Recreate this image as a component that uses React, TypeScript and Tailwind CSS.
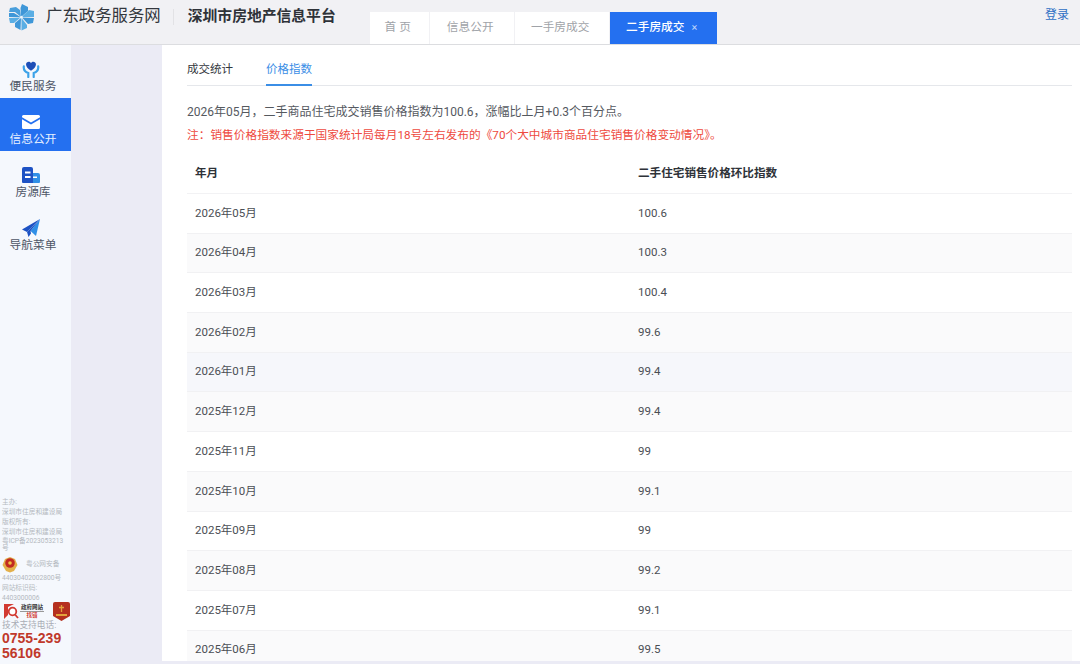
const rows = [
  ['2026年05月', '100.6'],
  ['2026年04月', '100.3'],
  ['2026年03月', '100.4'],
  ['2026年02月', '99.6'],
  ['2026年01月', '99.4'],
  ['2025年12月', '99.4'],
  ['2025年11月', '99'],
  ['2025年10月', '99.1'],
  ['2025年09月', '99'],
  ['2025年08月', '99.2'],
  ['2025年07月', '99.1'],
  ['2025年06月', '99.5'],
]

function Logo() {
  return (
    <svg width="27" height="28" viewBox="0 0 27 28" className="shrink-0">
      <path d="M13 14 L7 9 L1 9 L2 5 L8 4 L12 7 Z" fill="#4a9fdc" />
      <path d="M13 14 L12.500 5 L14 1 L20 4 L20 8 Z" fill="#3f97d8" />
      <path d="M13.500 14 L21 7 L26 8 L26 14 Z" fill="#5aaee4" />
      <path d="M14 14.500 L26 15 L25 20 L20 21 Z" fill="#3f97d8" />
      <path d="M13.500 15 L19 22 L19 25 L13.500 27.500 Z" fill="#5aaee4" />
      <path d="M13 15 L12.500 27 L7 24 L7 20 Z" fill="#3f97d8" />
      <path d="M12.500 14.500 L6 20 L2 20 L1 15 Z" fill="#5aaee4" />
      <path d="M12.500 14 L1 14 L1 10 L6 10 Z" fill="#3f97d8" />
      <circle cx="13.500" cy="14" r="1.300" fill="#eaf5fc" />
    </svg>
  )
}

function HeartHands() {
  return (
    <svg width="18" height="18" viewBox="0 0 20 20">
      <path d="M10 12 C6.500 9.500 4.500 7.500 4.500 5 C4.500 1.800 8.500 0.800 10 3.500 C11.500 0.800 15.500 1.800 15.500 5 C15.500 7.500 13.500 9.500 10 12 Z" fill="#1d4fb8" />
      <path d="M2 7 C1.500 11 4 13.500 7 14.500 L7 19 M18 7 C18.500 11 16 13.500 13 14.500 L13 19" fill="none" stroke="#3ba2e8" strokeWidth="2.400" strokeLinecap="round" />
    </svg>
  )
}

function Mail() {
  return (
    <svg width="18" height="14" viewBox="0 0 18 14">
      <path d="M1.500 0 H16.500 A1.500 1.500 0 0 1 18 1.500 L18 2.200 L9 7.500 L0 2.200 L0 1.500 A1.500 1.500 0 0 1 1.500 0 Z" fill="#fff" />
      <path d="M0 4.200 L9 9.500 L18 4.200 V12.500 A1.500 1.500 0 0 1 16.500 14 H1.500 A1.500 1.500 0 0 1 0 12.500 Z" fill="#fff" />
    </svg>
  )
}

function Building() {
  return (
    <svg width="18" height="16" viewBox="0 0 18 16">
      <path d="M0 2 A2 2 0 0 1 2 0 H9 A2 2 0 0 1 11 2 V16 H1 A1 1 0 0 1 0 15 Z" fill="#1d52c4" />
      <path d="M11 6 H16 A2 2 0 0 1 18 8 V15 A1 1 0 0 1 17 16 H11 Z" fill="#2f8fe6" />
      <rect x="3" y="4.500" width="5.500" height="2" fill="#fff" />
      <rect x="3" y="9" width="5.500" height="2" fill="#fff" />
      <rect x="11" y="9.500" width="4" height="1.500" fill="#fff" />
    </svg>
  )
}

function Plane() {
  return (
    <svg width="18" height="18" viewBox="0 0 18 18">
      <path d="M18 0 L0 10.500 L5 13 Z" fill="#1d52c4" />
      <path d="M18 0 L8.500 12 L14 17 Z" fill="#2f8fe6" />
      <path d="M18 0 L5 13 L6.500 18 L9 14.500 L8.500 12 Z" fill="#1d52c4" />
    </svg>
  )
}

function Badge() {
  return (
    <svg width="16" height="17" viewBox="0 0 16 17" className="shrink-0">
      <path d="M3 3 L8 1 L13 3 L15.500 9 L12 15 L8 16.500 L4 15 L0.500 9 Z" fill="#e3b04b" />
      <circle cx="8" cy="7" r="4.800" fill="#c22a22" />
      <circle cx="8" cy="7" r="1.800" fill="#f0c040" />
    </svg>
  )
}

function GovMark() {
  return (
    <svg width="15" height="15" viewBox="0 0 15 15" className="shrink-0">
      <path d="M0 0 H10 L4 3 V11 L0 15 Z" fill="#d23a32" />
      <circle cx="8.500" cy="7.500" r="3.800" fill="#fff" stroke="#d23a32" strokeWidth="1.800" />
      <path d="M11 10.500 L14 14" stroke="#d23a32" strokeWidth="1.800" />
    </svg>
  )
}

function Emblem() {
  return (
    <svg width="17" height="19" viewBox="0 0 17 19" className="shrink-0">
      <path d="M0 2 A2 2 0 0 1 2 0 H15 A2 2 0 0 1 17 2 V14 L8.500 19 L0 14 Z" fill="#b5301f" />
      <path d="M8.500 3 V10 M6 5.500 H11" stroke="#e3a23c" strokeWidth="1.300" />
      <rect x="3" y="12" width="11" height="2" fill="#e3a23c" />
    </svg>
  )
}

function SideItem({ icon, label, active }: { icon: React.ReactNode; label: string; active?: boolean }) {
  return (
    <div className={`flex h-[53px] flex-col items-center justify-end pb-[3px] pr-[5px] ${active ? 'bg-[#2470f0] text-[#e8f0ff]' : 'text-[#4d5566]'}`}>
      <div className="mr-[5px] flex h-[22px] items-center justify-center">{icon}</div>
      <span className="-mt-[3px] translate-y-[0px] text-[11.700px] leading-[18px]">{label}</span>
    </div>
  )
}

function Tab({ label, width, active }: { label: string; width: string; active?: boolean }) {
  return (
    <div className={`flex h-[32px] items-center justify-center pr-[3px] text-[11.700px] ${width} ${active ? 'bg-[#2470f0] font-medium text-white' : 'bg-white text-[#a0a3a8]'}`}>
      {label}
      {active && <span className="ml-[7px] text-[11px] font-normal text-[#bcd3fb]">×</span>}
    </div>
  )
}

export default function App() {
  return (
    <div className="flex h-[664px] w-[1080px] flex-col overflow-hidden bg-[#ebebf5] font-['Roboto','Noto_Sans_CJK_SC',sans-serif]">
      {/* top bar */}
      <header className="flex h-[45px] shrink-0 border-b border-[#dcdde0] bg-[#f1f1f4]">
        <div className="flex h-[33px] items-center pl-[8px]">
          <Logo />
          <span className="ml-[11px] text-[16.400px] text-[#33373d]">广东政务服务网</span>
          <span className="ml-[12px] h-[16px] w-px bg-[#e2e2e5]" />
          <span className="ml-[14px] text-[14.800px] font-bold text-[#2e3238]">深圳市房地产信息平台</span>
        </div>
        <nav className="ml-[34px] mt-[12px] flex">
          <Tab label="首 页" width="w-[59px]" />
          <div className="w-[1px]" />
          <Tab label="信息公开" width="w-[84px]" />
          <div className="w-[1px]" />
          <Tab label="一手房成交" width="w-[94px]" />
          <div className="w-[1px]" />
          <Tab label="二手房成交" width="w-[107px]" active />
        </nav>
        <span className="ml-auto mr-[11px] mt-[6px] text-[12px] leading-[18px] text-[#2e6fc4]">登录</span>
      </header>

      <div className="flex min-h-0 flex-1">
        {/* left menu */}
        <aside className="flex w-[71px] shrink-0 flex-col justify-between bg-[#f5f8fd]">
          <div>
            <SideItem icon={<HeartHands />} label="便民服务" />
            <SideItem icon={<Mail />} label="信息公开" active />
            <SideItem icon={<Building />} label="房源库" />
            <SideItem icon={<Plane />} label="导航菜单" />
          </div>
          <div className="pb-[3px] pl-[2px] text-[6.700px] leading-[10px] text-[#b4b8c0]">
            <p>主办:</p>
            <p className="whitespace-nowrap">深圳市住房和建设局</p>
            <p>版权所有:</p>
            <p className="whitespace-nowrap">深圳市住房和建设局</p>
            <p className="mt-[1px] w-[64px] break-all leading-[7px]">粤ICP备2023053213号</p>
            <div className="mt-[2px] flex h-[20px] items-center">
              <Badge />
              <span className="ml-[8px]">粤公网安备</span>
            </div>
            <p className="-mt-[1px] whitespace-nowrap">44030402002800号</p>
            <p>网站标识码:</p>
            <p>4403000006</p>
            <div className="ml-[2px] -mt-[1px] flex items-center">
              <GovMark />
              <div className="ml-[1px] w-[24px] text-center text-[5.500px] leading-[7px]">
                <p className="border-b border-[#999] font-bold text-[#333]">政府网站</p>
                <p className="font-bold text-[#d23a32]">找错</p>
              </div>
              <div className="ml-[9px]">
                <Emblem />
              </div>
            </div>
            <p className="-mt-[2px] text-[8.700px] leading-[12px] text-[#a9adb5]">技术支持电话:</p>
            <p className="w-[64px] break-all font-['Liberation_Sans'] text-[14px] font-bold leading-[15px] text-[#c0392b]">0755-23956106</p>
          </div>
        </aside>

        {/* main card */}
        <main className="ml-[91px] mb-[3px] min-w-0 flex-1 overflow-hidden bg-white pl-[25px] pr-[8px]">
          <div className="flex h-[41px] gap-[33px] border-b border-[#e5e7eb] text-[11.500px]">
            <span className="flex items-center pt-[9px] text-[#33373d]">成交统计</span>
            <span className="-mb-px flex items-center border-b-2 border-[#3b8ee6] pt-[10px] text-[#3b8ee6]">价格指数</span>
          </div>
          <p className="mt-[17px] text-[12px] leading-[18px] text-[#55595f]">
            2026年05月，二手商品住宅成交销售价格指数为100.6，涨幅比上月+0.3个百分点。
          </p>
          <p className="mt-[5px] text-[11.700px] leading-[18px] text-[#ee4a40]">
            注：销售价格指数来源于国家统计局每月18号左右发布的《70个大中城市商品住宅销售价格变动情况》。
          </p>
          <div className="mt-[10px]">
            <div className="flex h-[40px] items-center border-b border-[#f2f2f4] text-[11.600px] font-bold text-[#2e3238]">
              <span className="w-[451px] pl-[8px]">年月</span>
              <span>二手住宅销售价格环比指数</span>
            </div>
            {rows.map(([month, value], i) => (
              <div
                key={month}
                className={`flex h-[39.700px] items-center border-b border-[#f1f1f3] text-[11.500px] text-[#4a4e54] ${i === 4 ? 'bg-[#f6f7fb]' : i % 2 === 1 ? 'bg-[#fafafb]' : 'bg-white'}`}
              >
                <span className="w-[451px] pl-[8px]">{month}</span>
                <span>{value}</span>
              </div>
            ))}
          </div>
        </main>
      </div>
    </div>
  )
}
